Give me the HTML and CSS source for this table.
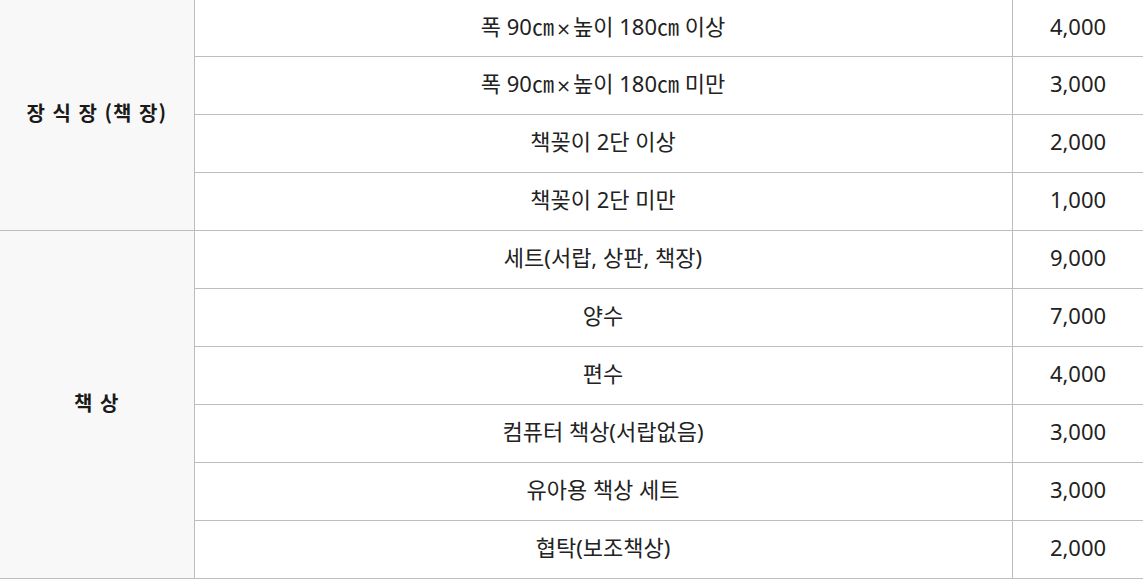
FILE: index.html
```html
<!DOCTYPE html>
<html lang="ko">
<head>
<meta charset="utf-8">
<link rel="stylesheet" href="styles.css">
</head>
<body>
<table class="price-table">
  <colgroup>
    <col class="col-cat">
    <col class="col-item">
    <col class="col-price">
  </colgroup>
  <tbody>
    <tr>
      <th class="cat" rowspan="4">장 식 장 (책 장)</th>
      <td class="item">폭 90㎝<span class="times">×</span>높이 180㎝ 이상</td>
      <td class="price">4,000</td>
    </tr>
    <tr>
      <td class="item">폭 90㎝<span class="times">×</span>높이 180㎝ 미만</td>
      <td class="price">3,000</td>
    </tr>
    <tr>
      <td class="item">책꽂이 2단 이상</td>
      <td class="price">2,000</td>
    </tr>
    <tr>
      <td class="item">책꽂이 2단 미만</td>
      <td class="price">1,000</td>
    </tr>
    <tr>
      <th class="cat" rowspan="6">책 상</th>
      <td class="item">세트(서랍, 상판, 책장)</td>
      <td class="price">9,000</td>
    </tr>
    <tr>
      <td class="item">양수</td>
      <td class="price">7,000</td>
    </tr>
    <tr>
      <td class="item">편수</td>
      <td class="price">4,000</td>
    </tr>
    <tr>
      <td class="item">컴퓨터 책상(서랍없음)</td>
      <td class="price">3,000</td>
    </tr>
    <tr>
      <td class="item">유아용 책상 세트</td>
      <td class="price">3,000</td>
    </tr>
    <tr>
      <td class="item">협탁(보조책상)</td>
      <td class="price">2,000</td>
    </tr>
  </tbody>
</table>
</body>
</html>
```

FILE: styles.css
```css
html, body {
  margin: 0;
  padding: 0;
  background: #ffffff;
}

body {
  font-family: "Noto Sans", "Noto Sans CJK KR", sans-serif;
  color: #222222;
  width: 1143px;
  overflow: hidden;
}

.price-table {
  width: 1144px;
  border-collapse: collapse;
  table-layout: fixed;
  font-size: 22px;
}

.col-cat { width: 194px; }
.col-item { width: 818px; }
.col-price { width: 132px; }

.price-table th,
.price-table td {
  padding: 0 0 3px;
  box-sizing: border-box;
  border: 1px solid #bdbdbd;
  text-align: center;
  vertical-align: middle;
  line-height: 1.2;
}

.price-table td {
  height: 58px;
}

.price-table tr:first-child th,
.price-table tr:first-child td {
  border-top: none;
}

.price-table tr:first-child td {
  height: 56px;
}

.price-table .cat {
  border-left: none;
  background: #f8f8f8;
  font-family: "Noto Sans CJK KR", "Noto Sans", sans-serif;
  font-size: 20px;
  font-weight: 700;
  letter-spacing: 1px;
  color: #1a1a1a;
}

.price-table .item,
.price-table .price {
  font-weight: 400;
}

.times {
  font-family: "DejaVu Sans", sans-serif;
  font-size: 18px;
  margin: 0 2px;
}
```
